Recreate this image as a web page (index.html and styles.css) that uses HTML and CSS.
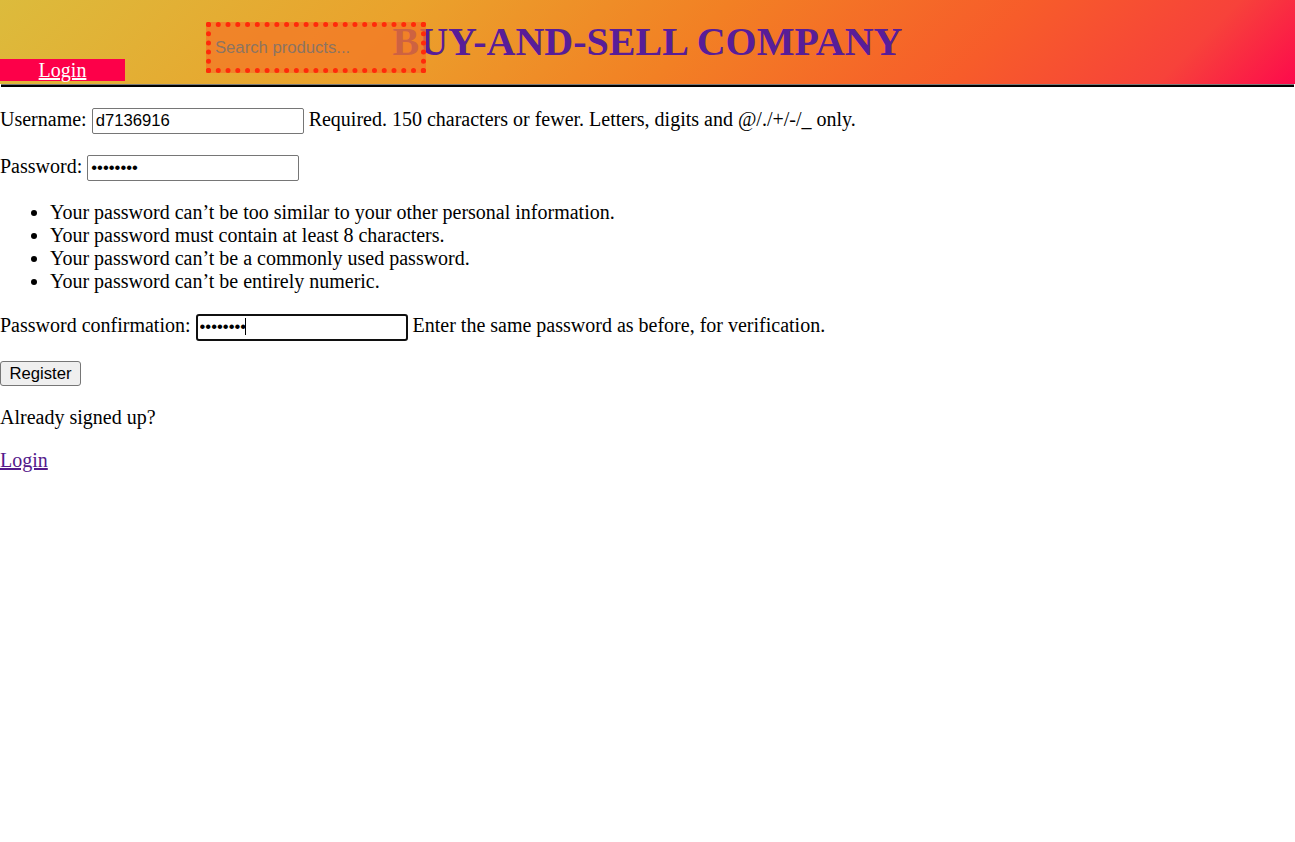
FILE: index.html
```html
<!DOCTYPE html>
<html lang="en">
<head>
<meta charset="utf-8">
<title>Register</title>
<link rel="stylesheet" href="styles.css">
</head>
<body>
<header class="topbar">
  <h1 class="brand">BUY-AND-SELL COMPANY</h1>
  <input class="search" type="text" placeholder="Search products...">
  <a class="nav-login" href="#">Login</a>
</header>
<div class="rule"></div>
<main class="content">
  <form class="register">
    <p class="field">Username: <input class="text-input" type="text" value="d7136916"> <span class="help">Required. 150 characters or fewer. Letters, digits and @/./+/-/_ only.</span></p>
    <p class="field">Password: <input class="text-input" type="password" value="password"></p>
    <ul class="rules">
      <li>Your password can’t be too similar to your other personal information.</li>
      <li>Your password must contain at least 8 characters.</li>
      <li>Your password can’t be a commonly used password.</li>
      <li>Your password can’t be entirely numeric.</li>
    </ul>
    <p class="field">Password confirmation: <span class="focus-wrap"><input class="text-input focused" type="password" value="password"><span class="caret"></span></span> <span class="help">Enter the same password as before, for verification.</span></p>
    <div class="actions"><button class="btn" type="button">Register</button></div>
  </form>
  <p class="para">Already signed up?</p>
  <p class="para"><a class="link" href="#">Login</a></p>
</main>
</body>
</html>
```

FILE: styles.css
```css
html, body {
  margin: 0;
  padding: 0;
  background: #ffffff;
}

body {
  font-family: "Liberation Serif", "Times New Roman", serif;
  font-size: 20px;
  color: #000;
}

.topbar {
  display: grid;
  height: 84px;
  background: linear-gradient(135deg, #dcbb3c 0%, #eaa22c 30%, #f28024 53%, #f75c2a 75%, #f7423a 90%, #fd0a4c 100%);
}

.topbar > * {
  grid-area: 1 / 1;
}

.brand {
  margin: 0;
  align-self: center;
  text-align: center;
  font-family: "Liberation Serif", "Times New Roman", serif;
  font-weight: bold;
  font-size: 40px;
  line-height: 46px;
  color: #581d98;
}

.search {
  justify-self: start;
  align-self: start;
  margin: 22px 0 0 206px;
  width: 220px;
  height: 51px;
  box-sizing: border-box;
  border: 5px dotted #ff2a0a;
  background: rgba(243, 120, 38, 0.76);
  font-family: "Liberation Sans", Arial, sans-serif;
  font-size: 16.67px;
  padding: 0 4px;
  outline: none;
}

.search::placeholder {
  color: #8c7462;
}

.nav-login {
  justify-self: start;
  align-self: end;
  margin-bottom: 3px;
  width: 125px;
  height: 22px;
  line-height: 22px;
  background: #fd0049;
  color: #ffffff;
  text-align: center;
  font-size: 20px;
  text-decoration: underline;
}

.rule {
  height: 2px;
  margin: 0 1px;
  border-top: 1px solid #7a7a7a;
  background: #000;
}

.content {
  margin: 0;
}

.field {
  margin: 20px 0;
  line-height: 25px;
}

.text-input {
  box-sizing: border-box;
  width: 212px;
  height: 26px;
  border: 1px solid #767676;
  border-radius: 2px;
  padding: 1px 3px;
  font-family: "Liberation Sans", Arial, sans-serif;
  font-size: 16.67px;
  color: #000;
  background: #fff;
  vertical-align: baseline;
}

.focus-wrap {
  position: relative;
  display: inline-block;
}

.text-input.focused {
  height: 27px;
  border: 2px solid #101010;
  border-radius: 3px;
  padding: 0 2px;
}

.caret {
  position: absolute;
  left: 49px;
  top: 5px;
  width: 1px;
  height: 17px;
  background: #000;
}

.rules {
  margin: 20px 0;
  padding-left: 50px;
  line-height: 23px;
}

.actions {
  margin: 20px 0;
}

.btn {
  box-sizing: border-box;
  width: 81px;
  height: 25px;
  padding: 0;
  border: 1px solid #767676;
  border-radius: 3px;
  background: #efefef;
  font-family: "Liberation Sans", Arial, sans-serif;
  font-size: 16.67px;
  color: #000;
}

.para {
  margin: 20px 0;
  line-height: 23px;
}

.link {
  color: #551a8b;
  text-decoration: underline;
}
```
